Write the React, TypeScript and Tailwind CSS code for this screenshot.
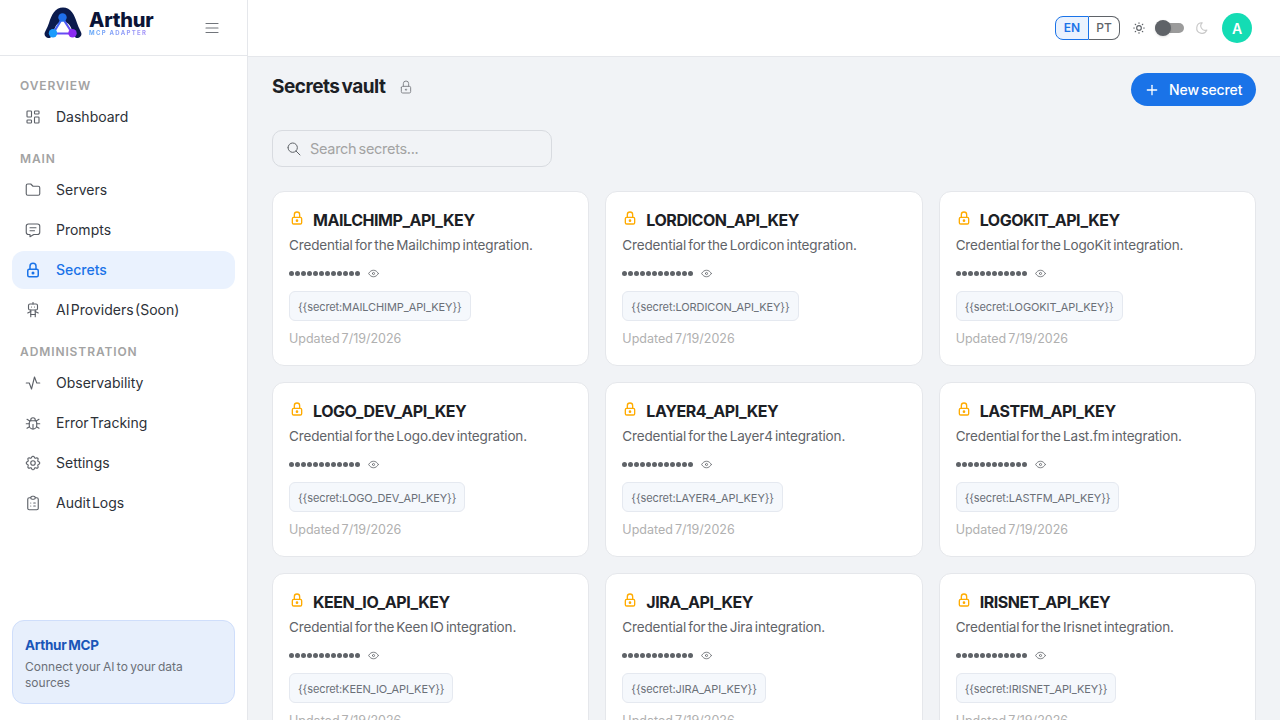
import type { ReactNode } from 'react';
import {
  TbActivity,
  TbBug,
  TbClipboardList,
  TbEye,
  TbFolder,
  TbLayoutDashboard,
  TbLock,
  TbMenu2,
  TbMessage,
  TbMoon,
  TbPlus,
  TbRobot,
  TbSearch,
  TbSettings,
  TbSun,
} from 'react-icons/tb';

const NAV: { title: string; items: { label: string; icon: ReactNode; active?: boolean }[] }[] = [
  { title: 'OVERVIEW', items: [{ label: 'Dashboard', icon: <TbLayoutDashboard /> }] },
  {
    title: 'MAIN',
    items: [
      { label: 'Servers', icon: <TbFolder /> },
      { label: 'Prompts', icon: <TbMessage /> },
      { label: 'Secrets', icon: <TbLock />, active: true },
      { label: 'AI Providers (Soon)', icon: <TbRobot /> },
    ],
  },
  {
    title: 'ADMINISTRATION',
    items: [
      { label: 'Observability', icon: <TbActivity /> },
      { label: 'Error Tracking', icon: <TbBug /> },
      { label: 'Settings', icon: <TbSettings /> },
      { label: 'Audit Logs', icon: <TbClipboardList /> },
    ],
  },
];

const SECRETS = [
  { name: 'MAILCHIMP_API_KEY', label: 'Mailchimp' },
  { name: 'LORDICON_API_KEY', label: 'Lordicon' },
  { name: 'LOGOKIT_API_KEY', label: 'LogoKit' },
  { name: 'LOGO_DEV_API_KEY', label: 'Logo.dev' },
  { name: 'LAYER4_API_KEY', label: 'Layer4' },
  { name: 'LASTFM_API_KEY', label: 'Last.fm' },
  { name: 'KEEN_IO_API_KEY', label: 'Keen IO' },
  { name: 'JIRA_API_KEY', label: 'Jira' },
  { name: 'IRISNET_API_KEY', label: 'Irisnet' },
];

function Logo() {
  return (
    <svg className="mt-[-9px] shrink-0" width="38" height="32" viewBox="0 0 38 32" fill="none">
      <defs>
        <linearGradient id="edge" x1="0" y1="0" x2="1" y2="1">
          <stop offset="0" stopColor="#1f7bf2" />
          <stop offset="1" stopColor="#7c3cf5" />
        </linearGradient>
      </defs>
      <path d="M0.5 27C0.5 30 4 32 6.5 30.5C8 29.5 8.5 28.5 9 27C11 19 13 15 19 15C25 15 27 19 29 27C29.5 28.5 30 29.5 31.5 30.5C34 32 37.5 30 37.5 27C37.5 25 35 22 33 16C30.5 8 27 0.5 19 0.5C11 0.5 7.5 8 5 16C3 22 0.5 25 0.5 27Z" fill="#0b1b4d" />
      <path d="M18.5 11L9 26.5H28.5Z" fill="#ffffff" />
      <path d="M18.5 11L9 26.5H28.5Z" stroke="url(#edge)" strokeWidth="2.2" strokeLinejoin="round" />
      <circle cx="18.5" cy="10.5" r="4.2" fill="#1f6fea" />
      <circle cx="9" cy="26.2" r="4.2" fill="#1b9cfc" />
      <circle cx="28.5" cy="26.2" r="4.2" fill="#8a2bf2" />
    </svg>
  );
}

function Sidebar() {
  return (
    <aside className="w-[248px] shrink-0 h-full bg-white border-r border-[#e5e7eb] flex flex-col">
      <div className="h-[56px] shrink-0 border-b border-[#e5e7eb] flex items-center pl-[44px] pr-[26px]">
        <Logo />
        <div className="ml-[7px] flex flex-col mt-[-9px]">
          <span className="text-[20px] leading-[18px] font-extrabold text-[#0b1437] tracking-[-0.2px]">Arthur</span>
          <span className="text-[6px] leading-[7px] font-bold tracking-[1.3px] bg-gradient-to-r from-[#5aa5f7] to-[#a98bf7] bg-clip-text text-transparent">MCP ADAPTER</span>
        </div>
        <TbMenu2 className="ml-auto text-[#71757b] text-[18px] stroke-[1.5]" />
      </div>

      <nav className="flex-1 px-[12px] pt-[22px]">
        {NAV.map(section => (
          <div key={section.title} className="mb-[15px]">
            <div className="px-[8px] mt-[-1px] text-[12px] leading-[18px] font-semibold tracking-[0.9px] text-[#a3a3a3] mb-[3px]">
              {section.title}
            </div>
            <div className="flex flex-col gap-[2px]">
              {section.items.map(item => (
                <div
                  key={item.label}
                  className={`h-[38px] rounded-[12px] pl-[12px] pb-[1px] flex items-center gap-[14px] text-[14px] [word-spacing:-2.5px] ${
                    item.active ? 'bg-[#eaf2fe] text-[#1a73e8] font-medium' : 'text-[#2d3138]'
                  }`}
                >
                  <span className={`text-[18px] ${item.active ? 'text-[#1a73e8]' : 'text-[#5d6168] [&_svg]:stroke-[1.5]'}`}>{item.icon}</span>
                  {item.label}
                </div>
              ))}
            </div>
          </div>
        ))}
      </nav>

      <div className="mx-[12px] mb-[16px] h-[84px] rounded-[12px] border border-[#cfdefb] bg-[#e7effc] px-[12px] pt-[14px]">
        <div className="text-[13.5px] leading-[20px] font-bold text-[#1a56b8] tracking-[-0.3px] [word-spacing:-1px]">Arthur MCP</div>
        <div className="mt-[4px] text-[12px] leading-[16px] text-[#6b7078] [word-spacing:-1px]">
          Connect your AI to your data sources
        </div>
      </div>
    </aside>
  );
}

function Topbar() {
  return (
    <header className="h-[57px] shrink-0 bg-white border-b border-[#e5e7eb] flex items-center justify-end pr-[28px]">
      <div className="flex h-[24px] rounded-[8px] text-[12px] font-semibold">
        <span className="w-[34px] flex items-center justify-center rounded-l-[8px] border border-[#1a73e8] bg-[#eaf2fe] text-[#1a73e8]">EN</span>
        <span className="w-[31px] flex items-center justify-center rounded-r-[8px] border border-l-0 border-[#5f6368] text-[#5f6368] font-medium">PT</span>
      </div>
      <TbSun className="ml-[12px] text-[14px] text-[#5f6368]" />
      <div className="relative ml-[9px] w-[29px] h-[10px] rounded-full bg-[#9b9b9b]">
        <span className="absolute left-0 top-[-3px] w-[16px] h-[16px] rounded-full bg-[#5f6368] shadow" />
      </div>
      <TbMoon className="ml-[11px] text-[14px] text-[#c9c9c9]" />
      <div className="ml-[13px] w-[30px] h-[30px] rounded-full bg-[#14dcb4] flex items-center justify-center text-white text-[14px] font-semibold">A</div>
    </header>
  );
}

function SecretCard({ name, label }: { name: string; label: string }) {
  return (
    <div className="h-[175px] rounded-[12px] bg-white border border-[#e5e7eb] pl-[16px] pr-[16px] pt-[16px]">
      <div className="flex items-center gap-[8px] h-[24px]">
        <TbLock className="text-[16px] text-[#ffab00] mt-[-4px] shrink-0" />
        <span className="text-[16px] font-bold text-[#1c2025] tracking-[-0.45px]">{name}</span>
      </div>
      <div className="mt-[3px] text-[13.5px] leading-[20px] text-[#5f6368] tracking-[-0.15px] [word-spacing:-1.5px]">
        Credential for the {label} integration.
      </div>
      <div className="mt-[8px] h-[20px] flex items-center gap-[7px]">
        <span className="flex gap-[1px]">
          {Array.from({ length: 12 }).map((_, i) => (
            <span key={i} className="w-[5px] h-[5px] rounded-full bg-[#5f6368]" />
          ))}
        </span>
        <TbEye className="text-[13px] text-[#5f6368] stroke-[1.5]" />
      </div>
      <div className="mt-[8px] inline-flex items-center h-[30px] pt-[3px] px-[8px] rounded-[6px] border border-[#e5e9f0] bg-[#f5f8fc] text-[11px] text-[#6b7078] tracking-[-0.1px]">
        {`{{secret:${name}}}`}
      </div>
      <div className="mt-[9px] text-[12.5px] leading-[18px] text-[#b0b0b0] [word-spacing:-1.5px]">Updated 7/19/2026</div>
    </div>
  );
}

export default function App() {
  return (
    <div className="h-screen w-screen overflow-hidden flex bg-[#f1f3f6] font-['Inter',sans-serif]">
      <Sidebar />
      <div className="flex-1 min-w-0 flex flex-col">
        <Topbar />
        <main className="flex-1 overflow-hidden px-[24px] pt-[16px]">
          <div className="flex items-start justify-between h-[57px]">
            <div className="flex items-center gap-[13px] h-[26px] mt-[1px]">
              <h1 className="text-[19px] font-bold text-[#1c2025] tracking-[-0.5px] [word-spacing:-2px]">Secrets vault</h1>
              <TbLock className="text-[16px] text-[#85878c] stroke-[1.5]" />
            </div>
            <button className="h-[33px] w-[125px] rounded-full bg-[#1a73e8] text-white text-[14px] font-[450] flex items-center pl-[13px] gap-[9px] tracking-[-0.1px] [word-spacing:-1.5px]">
              <TbPlus className="text-[16px]" />
              New secret
            </button>
          </div>
          <div className="w-[280px] h-[37px] rounded-[10px] border border-[#d8dbe0] flex items-center pl-[13px] gap-[8px] text-[14.5px] text-[#a3a3a3] tracking-[-0.3px] [word-spacing:-1.5px]">
            <TbSearch className="text-[16px] text-[#5f6368] stroke-[1.5]" />
            Search secrets...
          </div>
          <div className="mt-[24px] grid grid-cols-3 gap-[16px]">
            {SECRETS.map(s => (
              <SecretCard key={s.name} name={s.name} label={s.label} />
            ))}
          </div>
        </main>
      </div>
    </div>
  );
}
